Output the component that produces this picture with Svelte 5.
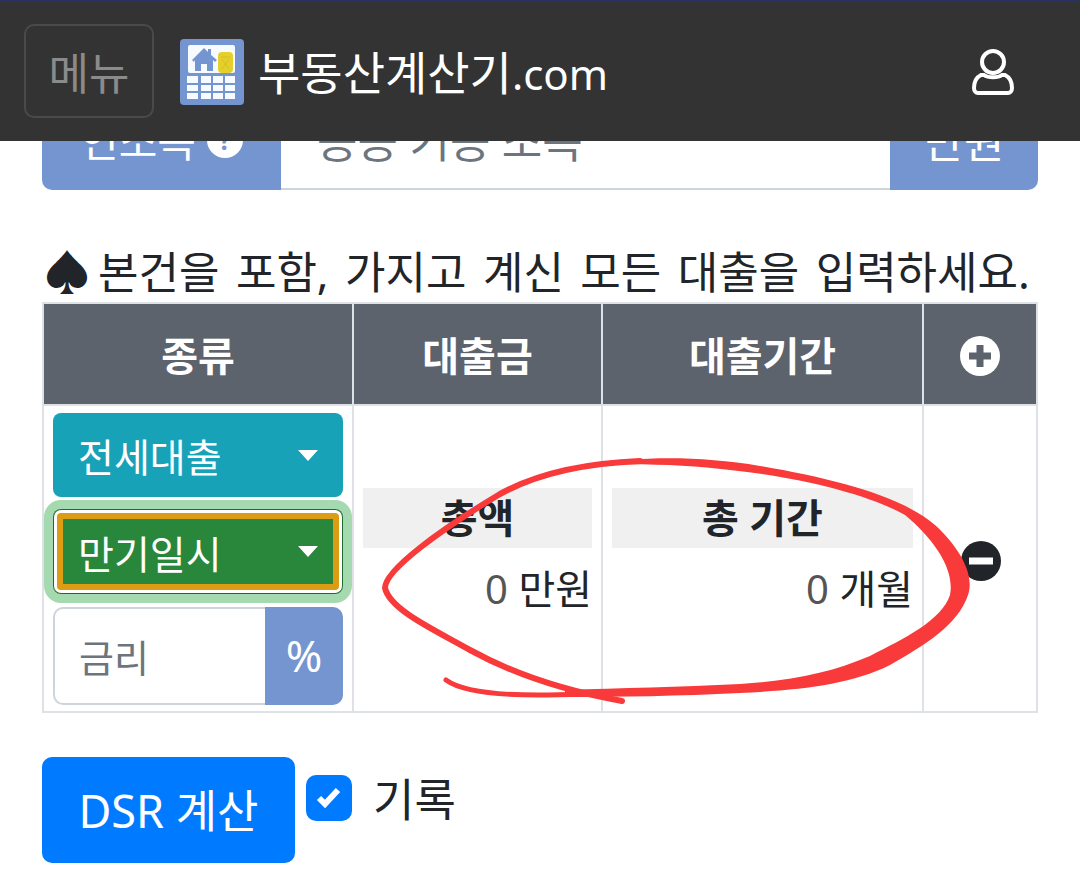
<script lang="ts">
	const headers = ['종류', '대출금', '대출기간'];
</script>

<div class="page">
	<header class="topbar">
		<button class="menu-btn">메뉴</button>
		<svg class="logo" viewBox="0 0 64 66">
			<rect width="64" height="66" rx="4" fill="#7595d0" />
			<rect x="8" y="6" width="47" height="28" rx="2" fill="#f6fbff" />
			<path d="M12 21 L24 9 L28 13 L28 10 L31 10 L31 16 L37 21 L35 23 L33 21 L33 32 L27 32 L27 25 L21 25 L21 32 L15 32 L15 21 L14 23 Z" fill="#7595d0" />
			<rect x="38" y="13" width="15" height="21" rx="4" fill="#e5cf2a" />
			<path d="M41 18 H50 M42 30 L49 20 M49 30 L42 20" stroke="#d6bf24" stroke-width="1" fill="none" />
			<g fill="#f6fbff">
				<rect x="7" y="37" width="11" height="7" />
				<rect x="21" y="37" width="10" height="7" />
				<rect x="33" y="37" width="10" height="7" />
				<rect x="45" y="37" width="10" height="7" />
				<rect x="7" y="46" width="11" height="6" />
				<rect x="21" y="46" width="10" height="6" />
				<rect x="33" y="46" width="10" height="6" />
				<rect x="45" y="46" width="10" height="6" />
				<rect x="7" y="54" width="11" height="6" />
				<rect x="21" y="54" width="10" height="6" />
				<rect x="33" y="54" width="10" height="6" />
				<rect x="45" y="54" width="10" height="6" />
			</g>
		</svg>
		<span class="brand">부동산계산기<span class="tld">.com</span></span>
		<svg class="user" viewBox="0 0 42 46" fill="none" stroke="#fff" stroke-width="4">
			<circle cx="21" cy="13" r="11" />
			<path d="M12 26 C16 29 26 29 30 26 L33 26 C37 28 40 33 40 39 C40 42 38 44 36 44 L6 44 C4 44 2 42 2 39 C2 33 5 28 9 26 Z" />
		</svg>
	</header>

	<main class="content">
		<div class="income">
			<div class="income-label">연소득 <span class="help">?</span></div>
			<div class="income-input">공공 기공 소득</div>
			<div class="income-unit">만원</div>
		</div>

		<p class="notice"><span class="spade">♠</span>본건을 포함, 가지고 계신 모든 대출을 입력하세요.</p>

		<table class="loans">
			<colgroup>
				<col class="c1" />
				<col class="c2" />
				<col class="c3" />
				<col class="c4" />
			</colgroup>
			<thead>
				<tr>
					{#each headers as h}
						<th>{h}</th>
					{/each}
					<th>
						<svg class="round plus" viewBox="0 0 40 40">
							<circle cx="20" cy="20" r="20" fill="#fff" />
							<path d="M20 9 V31 M9 20 H31" stroke="#5c636d" stroke-width="7" />
						</svg>
					</th>
				</tr>
			</thead>
			<tbody>
				<tr>
					<td class="kind">
						<div class="sel sel-info"><span>전세대출</span><i class="caret"></i></div>
						<div class="sel sel-focus"><span>만기일시</span><i class="caret"></i></div>
						<div class="rate">
							<div class="rate-input">금리</div>
							<div class="rate-unit">%</div>
						</div>
					</td>
					<td class="sum">
						<div class="sum-title">총액</div>
						<div class="sum-val"><span class="zero">0</span> 만원</div>
					</td>
					<td class="sum">
						<div class="sum-title">총 기간</div>
						<div class="sum-val"><span class="zero">0</span> 개월</div>
					</td>
					<td class="action">
						<svg class="round minus" viewBox="0 0 40 40">
							<circle cx="20" cy="20" r="20" fill="#212529" />
							<path d="M8 20 H32" stroke="#fff" stroke-width="7" />
						</svg>
					</td>
				</tr>
			</tbody>
		</table>

		<div class="actions">
			<button class="calc">DSR 계산</button>
			<span class="check">
				<svg viewBox="0 0 46 46">
					<path d="M13 23 L19 29 L32 15" fill="none" stroke="#fff" stroke-width="6" />
				</svg>
			</span>
			<span class="check-label">기록</span>
		</div>
	</main>

	<svg class="scribble" viewBox="0 0 1080 883">
		<g fill="none" stroke="#f93a3a" stroke-linecap="round">
			<path stroke-width="5" d="M446 680 C465 694 515 697 580 694" />
			<path stroke-width="6" d="M622 701 C560 690 510 672 470 650 C435 630 390 610 385 588 C385 570 440 530 500 494 C540 472 590 463 640 461" />
		</g>
		<path fill="#f93a3a" d="M590 465 C640 456 700 456 760 466 C830 478 900 495 935 525 C960 548 975 575 968 595 C958 625 925 645 890 665 C850 685 800 690 740 693 C680 696 620 697 565 697 L565 690 C620 688 680 687 740 684 C790 681 830 673 870 656 C905 638 942 620 950 595 C955 570 935 540 905 515 C870 495 800 477 730 470 C690 465 640 463 590 465 Z" />
	</svg>
</div>

<style>
	:global(body) {
		margin: 0;
		background: #fff;
	}
	.page {
		position: relative;
		width: 1080px;
		height: 883px;
		overflow: hidden;
		font-family: "Noto Sans", "Noto Sans CJK KR", sans-serif;
		color: #212529;
	}
	.topbar {
		position: absolute;
		top: 0;
		left: 0;
		right: 0;
		height: 139px;
		display: flex;
		align-items: center;
		padding: 0 66px 0 24px;
		background: #333;
		border-top: 2px solid #2a3064;
		z-index: 2;
	}
	.menu-btn {
		width: 130px;
		height: 94px;
		margin-top: -1px;
		padding: 0;
		border: 2px solid #4a4a4a;
		border-radius: 10px;
		background: transparent;
		color: #8b8b8b;
		font: inherit;
		font-size: 44px;
	}
	.logo {
		width: 64px;
		height: 66px;
		margin-left: 26px;
	}
	.brand {
		margin: 0 0 4px 14px;
		color: #fff;
		font-size: 46px;
		white-space: nowrap;
	}
	.tld {
		font-size: 42px;
	}
	.user {
		width: 42px;
		height: 46px;
		margin-left: auto;
	}
	.content {
		padding: 92px 42px 0;
	}
	.income {
		display: flex;
		height: 98px;
		border-radius: 10px;
		overflow: hidden;
		font-size: 44px;
		line-height: 98px;
	}
	.income-label {
		width: 239px;
		text-align: center;
		background: #7595d0;
		color: #fff;
		font-size: 42px;
	}
	.help {
		display: inline-block;
		width: 36px;
		height: 36px;
		border-radius: 50%;
		background: #fff;
		color: #7595d0;
		font-size: 26px;
		font-weight: 700;
		line-height: 36px;
		vertical-align: 7px;
	}
	.income-input {
		flex: 1;
		padding-left: 36px;
		border-bottom: 2px solid #ced4da;
		color: #6c757d;
	}
	.income-unit {
		width: 148px;
		text-align: center;
		background: #7595d0;
		color: #fff;
	}
	.notice {
		margin: 52px 0 0 1px;
		height: 60px;
		font-size: 44px;
		line-height: 60px;
		word-spacing: 5px;
		white-space: nowrap;
	}
	.spade {
		margin-right: 7px;
		font-size: 48px;
		line-height: 48px;
		vertical-align: -2px;
	}
	.loans {
		width: 994px;
		table-layout: fixed;
		border-collapse: collapse;
	}
	.c1 { width: 310px; }
	.c2 { width: 249px; }
	.c3 { width: 321px; }
	.c4 { width: 114px; }
	th,
	td {
		padding: 0;
		border: 2px solid #dee2e6;
	}
	th {
		height: 100px;
		background: #5c636d;
		color: #fff;
		font-size: 40px;
		font-weight: 700;
	}
	.round {
		display: block;
		width: 40px;
		height: 40px;
		margin: 0 auto;
	}
	.plus {
		margin-top: 3px;
	}
	.minus {
		margin-top: 4px;
	}
	.kind {
		height: 289px;
		padding: 7px 9px 6px;
		vertical-align: top;
	}
	.sel {
		display: flex;
		align-items: center;
		justify-content: space-between;
		box-sizing: border-box;
		border-radius: 8px;
		padding: 0 25px;
		color: #fff;
		font-size: 39px;
	}
	.sel-info {
		height: 84px;
		background: #17a2b8;
	}
	.sel-focus {
		height: 85px;
		margin-top: 12px;
		background: #28873a;
		box-shadow:
			inset 0 0 0 1px #1d6b2f,
			inset 0 0 0 4px #fff,
			inset 0 0 0 10px #dc9c14,
			0 0 0 9px #a5d9b0;
	}
	.caret {
		width: 0;
		height: 0;
		border-left: 10px solid transparent;
		border-right: 10px solid transparent;
		border-top: 11px solid #fff;
	}
	.rate {
		display: flex;
		height: 98px;
		margin-top: 13px;
		font-size: 38px;
		line-height: 96px;
	}
	.rate-input {
		flex: 1;
		padding-left: 24px;
		border: 2px solid #ced4da;
		border-right: 0;
		border-radius: 10px 0 0 10px;
		color: #6c757d;
	}
	.rate-unit {
		width: 78px;
		text-align: center;
		background: #7595d0;
		border-radius: 0 10px 10px 0;
		color: #fff;
		font-size: 44px;
	}
	.sum {
		padding: 0 9px;
		vertical-align: middle;
	}
	.sum-title {
		height: 60px;
		margin-top: -13px;
		background: #f0f0f0;
		text-align: center;
		font-size: 40px;
		font-weight: 700;
		line-height: 60px;
	}
	.sum-val {
		margin-top: 13px;
		text-align: right;
		font-size: 40px;
		line-height: 56px;
	}
	.zero {
		color: #555;
	}
	.action {
		vertical-align: middle;
		padding-left: 2px;
	}
	.actions {
		display: flex;
		align-items: flex-start;
		margin-top: 44px;
	}
	.calc {
		width: 253px;
		height: 106px;
		padding: 0 0 4px;
		border: 0;
		border-radius: 10px;
		background: #007bff;
		color: #fff;
		font: inherit;
		font-size: 45px;
	}
	.check {
		width: 46px;
		height: 46px;
		margin: 18px 0 0 11px;
		border-radius: 10px;
		background: #007bff;
	}
	.check svg {
		display: block;
	}
	.check-label {
		margin: 13px 0 0 21px;
		font-size: 45px;
		line-height: 60px;
	}
	.scribble {
		position: absolute;
		top: 0;
		left: 0;
		width: 1080px;
		height: 883px;
		pointer-events: none;
		z-index: 1;
	}
</style>
